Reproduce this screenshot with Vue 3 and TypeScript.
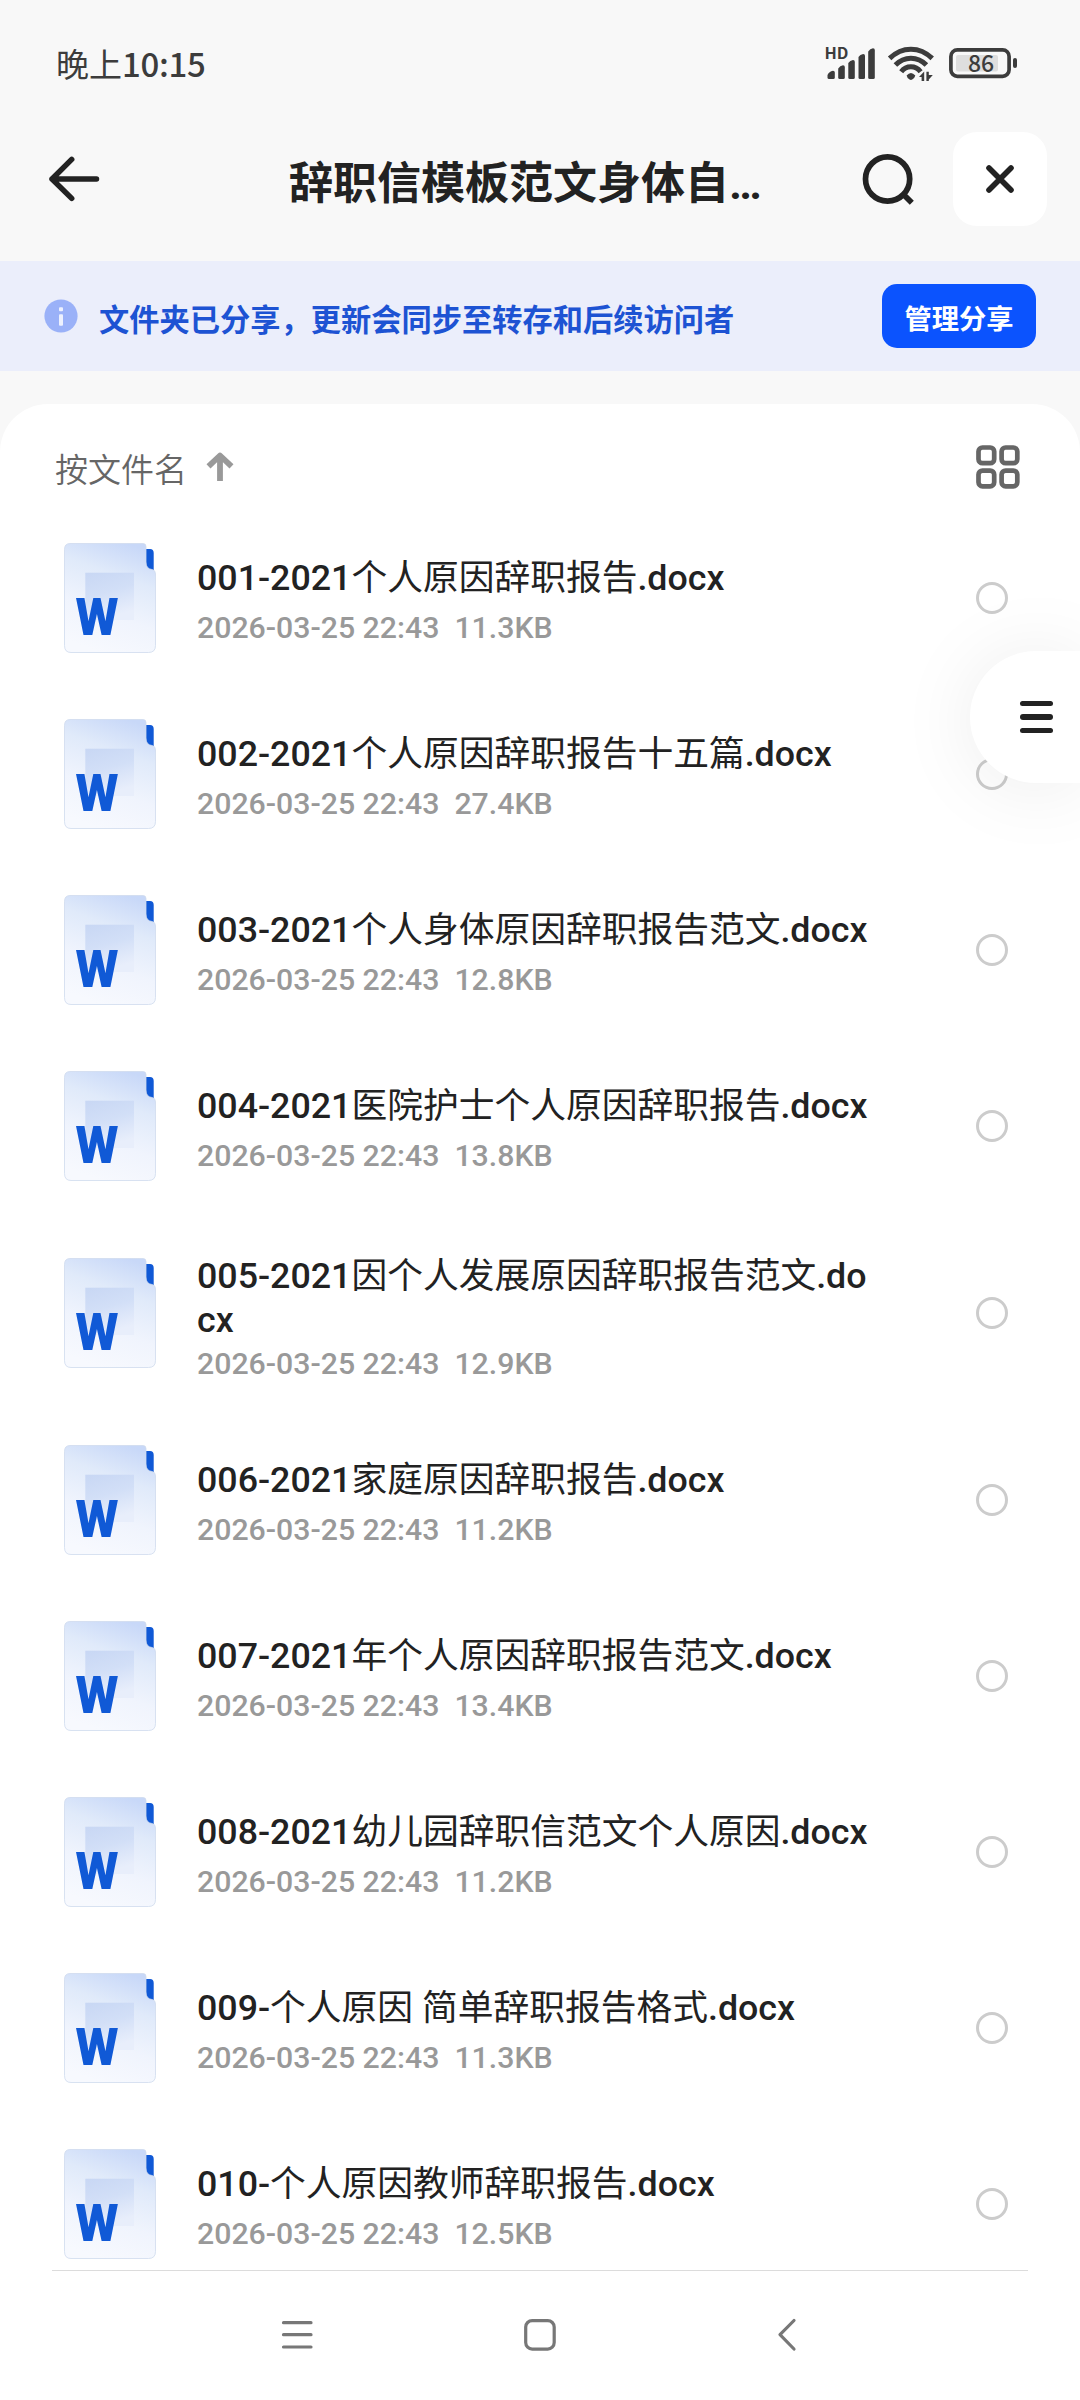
<script setup lang="ts">
interface Part { text: string; cjk: boolean }
interface FileItem { name: string; date: string; size: string; wrapped?: boolean }

const date = '2026-03-25 22:43'
const files: FileItem[] = [
  { name: '001-2021个人原因辞职报告.docx', date, size: '11.3KB' },
  { name: '002-2021个人原因辞职报告十五篇.docx', date, size: '27.4KB' },
  { name: '003-2021个人身体原因辞职报告范文.docx', date, size: '12.8KB' },
  { name: '004-2021医院护士个人原因辞职报告.docx', date, size: '13.8KB' },
  { name: '005-2021因个人发展原因辞职报告范文.docx', date, size: '12.9KB', wrapped: true },
  { name: '006-2021家庭原因辞职报告.docx', date, size: '11.2KB' },
  { name: '007-2021年个人原因辞职报告范文.docx', date, size: '13.4KB' },
  { name: '008-2021幼儿园辞职信范文个人原因.docx', date, size: '11.2KB' },
  { name: '009-个人原因 简单辞职报告格式.docx', date, size: '11.3KB' },
  { name: '010-个人原因教师辞职报告.docx', date, size: '12.5KB' },
]

// Latin runs are medium weight, Chinese runs stay regular.
function split(name: string): Part[] {
  return (name.match(/[\u4e00-\u9fff]+|[^\u4e00-\u9fff]+/g) ?? []).map((text) => ({
    text,
    cjk: /[\u4e00-\u9fff]/.test(text),
  }))
}
</script>

<template>
  <div class="screen">
    <header class="status">
      <span class="time">晚上<span class="digits">10:15</span></span>
      <svg class="status-icons" width="200" height="44" viewBox="820 42 200 44">
        <text x="824.5" y="59" font-size="15.5" font-weight="700" textLength="24" lengthAdjust="spacingAndGlyphs" class="ui">HD</text>
        <g fill="#3c3c3c">
          <path d="M827.5 77.5V75Q829 71.500 833 70.700Q834.800 70.700 834.800 72.500V77.500Q834.800 79 833.300 79H829Q827.500 79 827.500 77.500Z" />
          <path d="M838.200 68.500Q840 65.800 843 65.300Q844.800 65.300 844.800 67V77.500Q844.800 79 843.300 79H839.700Q838.200 79 838.200 77.500Z" />
          <path d="M848.300 63Q850 60.500 853 60Q854.800 60 854.800 61.800V77.500Q854.800 79 853.300 79H849.800Q848.300 79 848.300 77.500Z" />
          <path d="M858.500 57Q860 54.500 863.200 54Q865 54 865 55.800V77.500Q865 79 863.500 79H860Q858.500 79 858.500 77.500Z" />
          <path d="M868.200 51.500Q870 48.800 873 48.300Q874.800 48.300 874.800 50V77.500Q874.800 79 873.300 79H869.700Q868.200 79 868.200 77.500Z" />
          <path d="M906.600 75.500Q910.900 70.500 915.300 75.500Q915 77.500 912.200 79.600Q910.900 80.500 909.600 79.600Q906.800 77.500 906.600 75.500Z" />
          <path d="M919 77L924.200 71.500V81H921.600V77ZM926.400 71.800H928.800V75H932.800L928.800 79.500V81H926.400Z" />
        </g>
        <g fill="none" stroke="#3c3c3c" stroke-width="5">
          <path d="M889.600 58.400Q899 49.200 910.900 49.200T932.200 58.400" />
          <path d="M895.400 65Q902 58.200 910.900 58.200T926.400 65" />
          <path d="M901.200 71.800Q905 66.800 910.900 66.800T920.600 71.800" />
        </g>
        <rect x="956" y="55" width="42" height="16.500" rx="2" fill="#dedede" />
        <rect x="950.900" y="49.900" width="58.200" height="26.400" rx="6.500" fill="none" stroke="#3c3c3c" stroke-width="3.700" />
        <rect x="1013" y="58" width="4" height="10" rx="2" fill="#3c3c3c" />
        <text x="981" y="72" font-size="23" font-weight="500" text-anchor="middle" class="ui">86</text>
      </svg>
    </header>

    <nav class="titlebar">
      <svg class="back" width="56" height="56" viewBox="46 150.300 56 56" fill="none" stroke="#222" stroke-width="5.500" stroke-linecap="round" stroke-linejoin="round">
        <path d="M96.500 178.300H52M71.700 158.700L52 178.300L71.700 197.700" />
      </svg>
      <h1>辞职信模板范文身体自<span class="dots">…</span></h1>
      <svg class="search" width="56" height="56" viewBox="860 150.500 56 56" fill="none" stroke="#222" stroke-width="5.700">
        <circle cx="887.600" cy="178.500" r="22.100" />
        <path d="M902.500 193L911.800 202.300" />
      </svg>
      <div class="close">
        <svg width="32" height="32" viewBox="-16 -16 32 32" stroke="#222" stroke-width="5.600" stroke-linecap="round">
          <path d="M-11-11L11 11M11-11L-11 11" />
        </svg>
      </div>
    </nav>

    <section class="banner">
      <svg width="34" height="34" viewBox="-17 -17 34 34">
        <circle r="16.600" fill="#9ab1f8" />
        <rect x="-2" y="-8.800" width="4" height="4" rx="1" fill="#edf1fe" />
        <rect x="-2" y="-1.700" width="4" height="11.500" rx="1" fill="#edf1fe" />
      </svg>
      <p>文件夹已分享，更新会同步至转存和后续访问者</p>
      <button type="button">管理分享</button>
    </section>

    <main class="card">
      <div class="sort">
        <span class="sort-label">按文件名</span>
        <svg class="asc" width="28" height="30" viewBox="-14 0 28 30" fill="none" stroke="#999" stroke-width="5.800">
          <path d="M0 29V4M-11.500 14.300L0 3.500L11.500 14.300" stroke-linejoin="round" />
        </svg>
        <svg class="grid" width="44" height="44" viewBox="0 0 44 44" fill="none" stroke="#666" stroke-width="4.700">
          <rect x="2.500" y="2.500" width="15.700" height="15.700" rx="4" />
          <rect x="25.600" y="2.500" width="15.700" height="15.700" rx="4" />
          <rect x="2.500" y="25.600" width="15.700" height="15.700" rx="4" />
          <rect x="25.600" y="25.600" width="15.700" height="15.700" rx="4" />
        </svg>
      </div>

      <ul class="list">
        <li v-for="f in files" :key="f.name" :class="{ wrapped: f.wrapped }">
          <svg class="doc" width="92" height="110" viewBox="0 0 92 110">
            <defs>
              <linearGradient id="page" x1="0.700" y1="0" x2="0.400" y2="1">
                <stop offset="0" stop-color="#c8d8f8" />
                <stop offset="0.300" stop-color="#e0eafa" />
                <stop offset="0.650" stop-color="#f0f4fd" />
                <stop offset="1" stop-color="#f7f9fe" />
              </linearGradient>
              <linearGradient id="block" x1="0" y1="0" x2="0.300" y2="1">
                <stop offset="0" stop-color="#c8d7f4" />
                <stop offset="0.500" stop-color="#d2dff7" />
                <stop offset="1" stop-color="#e8eefb" />
              </linearGradient>
            </defs>
            <path d="M82 6H86Q89.700 6 89.700 10V27H82Z" fill="#1059d6" />
            <path d="M6 0.500H79Q82 0.500 82 3.500V19Q82 26 88 26.500Q91.500 27 91.500 31V102.500Q91.500 109.500 84.500 109.500H7Q0.500 109.500 0.500 102.500V6.500Q0.500 0.500 6 0.500Z" fill="url(#page)" stroke="#cfdaee" stroke-width="0.800" />
            <rect x="21.300" y="29.700" width="48.700" height="47.300" fill="url(#block)" />
            <text x="11.500" y="91.700" font-size="51.500" textLength="43" lengthAdjust="spacingAndGlyphs">W</text>
          </svg>
          <div class="info">
            <div class="name"><span v-for="(p, i) in split(f.name)" :key="i" :class="{ cjk: p.cjk }">{{ p.text }}</span></div>
            <div class="meta">{{ f.date }}&nbsp; {{ f.size }}</div>
          </div>
          <i class="radio"></i>
        </li>
      </ul>
    </main>

    <footer class="sysnav">
      <svg width="1080" height="129" viewBox="0 2271 1080 129" fill="none" stroke="#777" stroke-width="3.200" stroke-linecap="round" stroke-linejoin="round">
        <path d="M283.500 2322.700H311M283.500 2334.700H311M283.500 2347H311" />
        <rect x="525.700" y="2320.600" width="28.500" height="28.500" rx="6.500" />
        <path d="M794 2320.500L780 2334.700L794 2349" />
      </svg>
    </footer>

    <div class="float">
      <i></i><i></i><i></i>
    </div>
  </div>
</template>

<style>
body { margin: 0; background: #f8f8f8; }
</style>

<style scoped>
.screen {
  position: relative;
  display: flex;
  flex-direction: column;
  width: 1080px;
  height: 2400px;
  overflow: hidden;
  background: #f8f8f8;
  color: #222;
  font-family: Roboto, "Noto Sans CJK SC", sans-serif;
}
.status, .titlebar, .banner, .sysnav { flex: none; }
svg { display: block; flex: none; }
.status {
  display: flex;
  align-items: center;
  justify-content: space-between;
  height: 128px;
  padding: 0 60px 0 56px;
  box-sizing: border-box;
}
.time {
  margin-bottom: 2px;
  font: 400 33px/44px "Noto Sans CJK SC", sans-serif;
  color: #3c3c3c;
}
.digits { font-weight: 500; letter-spacing: -0.300px; }
.ui { font-family: "Noto Sans CJK SC", sans-serif; fill: #3c3c3c; }
.titlebar {
  display: flex;
  align-items: center;
  height: 133px;
  padding: 0 32px 32px 46px;
  box-sizing: border-box;
}
h1 {
  margin: 7px 0 0 187px;
  width: 481px;
  font: 700 44px/60px "Noto Sans CJK SC", sans-serif;
  white-space: nowrap;
}
.dots { font-family: Roboto, sans-serif; font-weight: 700; }
.search { margin-left: 90px; }
.close {
  display: flex;
  align-items: center;
  justify-content: center;
  width: 94px;
  height: 94px;
  margin-left: 37px;
  border-radius: 24px;
  background: #fff;
}
.banner {
  display: flex;
  align-items: center;
  height: 110px;
  padding: 0 44px;
  background: #ebeefb;
}
.banner p {
  flex: 1;
  margin: 3px 0 0 21px;
  font: 700 30.250px/44px "Noto Sans CJK SC", sans-serif;
  color: #1d53d3;
  white-space: nowrap;
}
.banner button {
  width: 154px;
  height: 64px;
  padding: 1px 0 0;
  border: 0;
  border-radius: 15px;
  background: #0b53fe;
  color: #fff;
  font: 700 27.300px/62px "Noto Sans CJK SC", sans-serif;
}
.card {
  flex: 1;
  margin-top: 33px;
  border-radius: 48px 48px 0 0;
  background: #fff;
}
.sort {
  display: flex;
  align-items: center;
  height: 106px;
  padding: 20px 60px 0 55px;
  box-sizing: border-box;
  color: #666;
  font: 350 33px/48px "Noto Sans CJK SC", sans-serif;
}
.sort-label { margin-top: 1px; }
.asc { margin-left: 19px; }
.grid { margin-left: auto; }
.list {
  margin: 0 52px;
  padding: 0;
  height: 1761px;
  box-sizing: border-box;
  overflow: hidden;
  list-style: none;
  border-bottom: 1px solid #dcdcdc;
}
.list li {
  display: flex;
  align-items: center;
  height: 176px;
  padding: 0 20px 0 12px;
}
.list li.wrapped { height: 198px; }
.doc text { font-family: Roboto, sans-serif; font-weight: 900; fill: #1059d6; }
.info { width: 672px; margin: 4px 0 0 41px; }
.wrapped .info { margin-top: 8px; }
.name {
  font-size: 35.750px;
  font-weight: 500;
  line-height: 44px;
  word-break: break-all;
}
.name span { line-height: 1; }
.cjk { font-family: "Noto Sans CJK SC", sans-serif; font-weight: 400; }
.meta {
  margin-top: 11px;
  font-size: 30.250px;
  font-weight: 500;
  line-height: 34px;
  color: #999;
}
.wrapped .meta { margin-top: 5px; }
.radio {
  width: 26px;
  height: 26px;
  margin-left: auto;
  border: 3px solid #ccc;
  border-radius: 50%;
}
.sysnav { height: 129px; background: #fff; }
.float {
  position: absolute;
  top: 651px;
  right: 0;
  display: flex;
  flex-direction: column;
  justify-content: center;
  gap: 8px;
  width: 110px;
  height: 132px;
  padding-left: 50px;
  box-sizing: border-box;
  border-radius: 66px 0 0 66px;
  background: #fff;
  box-shadow: 0 4px 80px rgba(0, 0, 0, 0.080);
}
.float i {
  width: 32.500px;
  height: 5.500px;
  border-radius: 3px;
  background: #222;
}
</style>
